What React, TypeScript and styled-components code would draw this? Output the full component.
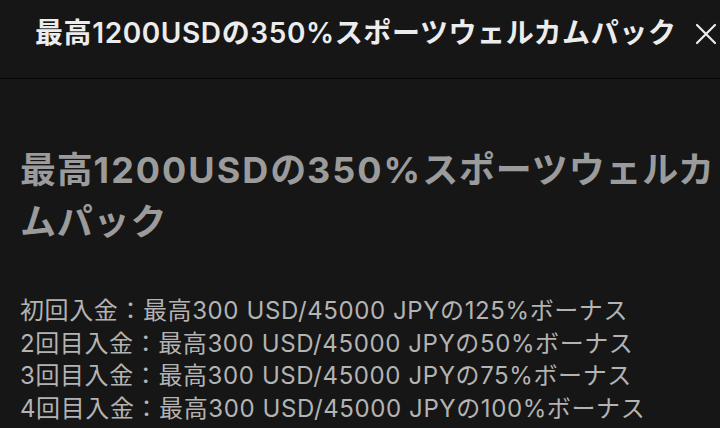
import React from 'react';
import styled, { createGlobalStyle } from 'styled-components';

const GlobalStyle = createGlobalStyle`
    html, body {
        margin: 0;
        padding: 0;
        background: #161616;
    }
    body {
        font-family: "Inter", "Noto Sans CJK JP", sans-serif;
        overflow: hidden;
    }
`;

const Page = styled.div`
    width: 720px;
    height: 428px;
    background: #161616;
    overflow: hidden;
`;

const Header = styled.header`
    height: 79px;
    box-sizing: border-box;
    border-bottom: 1px solid #050505;
    display: flex;
    align-items: flex-start;
    justify-content: space-between;
    padding: 14px 2px 0 35px;
`;

const HeaderTitle = styled.h1`
    margin: 0;
    font-size: 28px;
    line-height: 38px;
    font-weight: 600;
    letter-spacing: 0.6px;
    color: #ececec;
    white-space: nowrap;
`;

const CloseButton = styled.button`
    border: none;
    background: none;
    padding: 0;
    margin-top: 8px;
    width: 24px;
    height: 24px;
    display: flex;
    align-items: center;
    justify-content: center;
    cursor: pointer;
`;

const Body = styled.main`
    padding: 65px 0 0 20px;
`;

const Title = styled.h2`
    margin: 0;
    font-size: 36px;
    line-height: 52px;
    font-weight: 700;
    letter-spacing: 0.8px;
    color: #9b9b9b;
    word-break: break-all;
`;

// Latin runs in the title sit wider than the CJK font's own Latin
const Wide = styled.span<{ $extra: number }>`
    letter-spacing: ${({ $extra }) => $extra}px;
`;

const BonusList = styled.ul`
    list-style: none;
    margin: 47px 0 0;
    padding: 0;
`;

const BonusItem = styled.li`
    font-size: 24px;
    line-height: 32.7px;
    letter-spacing: 0.6px;
    color: #b3b3b3;
    white-space: nowrap;
`;

const bonuses = [
    '初回入金：最高300 USD/45000 JPYの125%ボーナス',
    '2回目入金：最高300 USD/45000 JPYの50%ボーナス',
    '3回目入金：最高300 USD/45000 JPYの75%ボーナス',
    '4回目入金：最高300 USD/45000 JPYの100%ボーナス',
];

export default function App() {
    return (
        <Page>
            <GlobalStyle />
            <Header>
                <HeaderTitle>最高1200USDの350%スポーツウェルカムパック</HeaderTitle>
                <CloseButton aria-label="閉じる">
                    <svg width="22" height="22" viewBox="0 0 22 22">
                        <path d="M2 2 L20 20 M20 2 L2 20" stroke="#ececec" strokeWidth="2.2" strokeLinecap="round" />
                    </svg>
                </CloseButton>
            </Header>
            <Body>
                <Title>
                    最高<Wide $extra={2}>1200USD</Wide>の<Wide $extra={2}>350%</Wide>スポーツウェルカムパック
                </Title>
                <BonusList>
                    {bonuses.map(b => (
                        <BonusItem key={b}>{b}</BonusItem>
                    ))}
                </BonusList>
            </Body>
        </Page>
    );
}
